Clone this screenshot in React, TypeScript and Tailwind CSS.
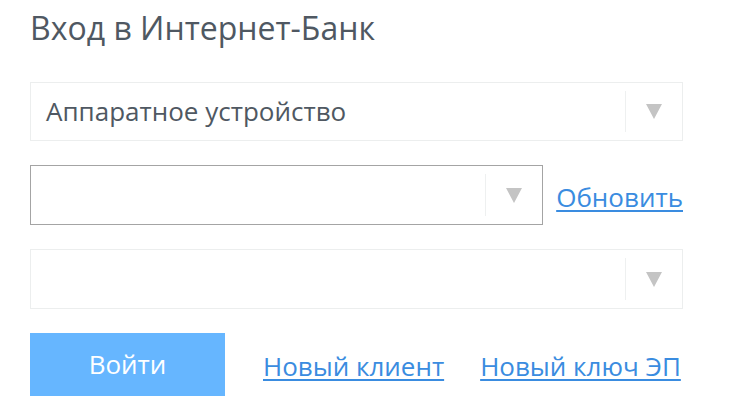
import type { ReactNode } from "react"

function Arrow() {
  return (
    <svg width="16" height="15" viewBox="0 0 16 15" className="block">
      <path d="M0 0 H16 L8 15 Z" fill="#c4c4c4" />
    </svg>
  )
}

function Select({ value, className, dark }: { value?: ReactNode; className: string; dark?: boolean }) {
  return (
    <div
      className={`flex items-stretch bg-white ${dark ? "border border-[#a4a4a4]" : "border border-[#eceeee]"} ${className}`}
    >
      <div className="flex flex-1 items-center pl-[15px] text-[26px] text-[#4f5862]">{value}</div>
      <div className="my-[8px] w-px bg-[#eef0f0]" />
      <div className="flex w-[56px] items-center justify-center">
        <Arrow />
      </div>
    </div>
  )
}

export default function App() {
  return (
    <div
      className="h-[412px] w-[729px] bg-white pl-[30px] pt-[6px]"
      style={{ fontFamily: '"Open Sans", "Noto Sans", sans-serif' }}
    >
      <h1 className="text-[32px] leading-[44px] text-[#4f5862]">Вход в Интернет-Банк</h1>

      <div className="mt-[32px] flex w-[653px] flex-col gap-[24px]">
        <Select className="h-[59px]" value="Аппаратное устройство" />

        <div className="flex items-center">
          <Select className="h-[60px] w-[514px]" dark />
          <a href="#" className="ml-[13px] mt-[4px] text-[26px] text-[#3a8ce0] underline underline-offset-[3px]">
            Обновить
          </a>
        </div>

        <Select className="h-[60px]" />

        <div className="flex items-center">
          <button className="h-[63px] w-[195px] bg-[#66b6ff] text-[26px] text-white">Войти</button>
          <a href="#" className="ml-[38px] mt-[4px] text-[26px] text-[#3a8ce0] underline underline-offset-[3px]">
            Новый клиент
          </a>
          <a href="#" className="ml-[36px] mt-[4px] text-[26px] text-[#3a8ce0] underline underline-offset-[3px]">
            Новый ключ ЭП
          </a>
        </div>
      </div>
    </div>
  )
}
